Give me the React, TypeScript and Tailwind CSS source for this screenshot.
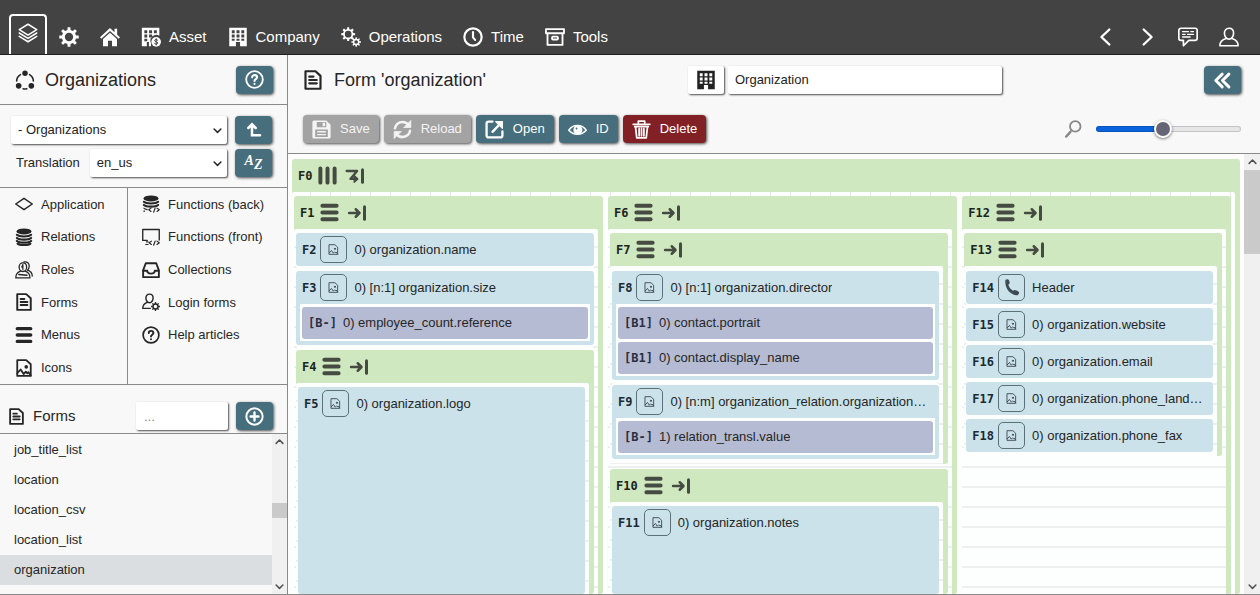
import React, { useState } from 'react';

type IconProps = { className?: string };

function Svg({
  className = 'size-5',
  fill = false,
  w = 2,
  children,
}: {
  className?: string;
  fill?: boolean;
  w?: number;
  children: React.ReactNode;
}) {
  return (
    <svg
      viewBox="0 0 24 24"
      className={`shrink-0 ${className}`}
      fill={fill ? 'currentColor' : 'none'}
      stroke={fill ? 'none' : 'currentColor'}
      strokeWidth={w}
      strokeLinecap="round"
      strokeLinejoin="round"
      aria-hidden="true"
    >
      {children}
    </svg>
  );
}

function gearPath(cx: number, cy: number, outer: number, inner: number, hole: number, teeth = 8) {
  const pts: string[] = [];
  const step = (Math.PI * 2) / teeth;
  for (let i = 0; i < teeth; i++) {
    const a = i * step - Math.PI / 2;
    const at = (r: number, d: number) =>
      `${(cx + r * Math.cos(a + d * step)).toFixed(2)} ${(cy + r * Math.sin(a + d * step)).toFixed(2)}`;
    pts.push(at(inner, -0.28), at(outer, -0.18), at(outer, 0.18), at(inner, 0.28));
  }
  return `M${pts.join('L')}ZM${cx - hole} ${cy}a${hole} ${hole} 0 1 0 ${hole * 2} 0a${hole} ${hole} 0 1 0 ${-hole * 2} 0Z`;
}

const LayersIcon = ({ className }: IconProps) => (
  <Svg className={className} w={1.8}>
    <path d="M12 1.5 22.5 8 12 14.5 1.5 8Z" />
    <path d="M1.5 12 12 18.500 22.500 12M1.500 16 12 22.500 22.500 16" />
  </Svg>
);
const GearIcon = ({ className }: IconProps) => (
  <Svg className={className} fill>
    <path fillRule="evenodd" d={gearPath(12, 12, 11.8, 8.6, 5)} />
  </Svg>
);
const GearsIcon = ({ className }: IconProps) => (
  <Svg className={className} fill>
    <path fillRule="evenodd" d={gearPath(8.6, 8.6, 8.4, 6.2, 4)} />
    <path fillRule="evenodd" d={gearPath(18.2, 18, 5.8, 4.1, 2.2)} />
  </Svg>
);
const HomeIcon = ({ className }: IconProps) => (
  <Svg className={className} fill>
    <path d="M12 1.2 0 12.4l1.6 1.8L12 4.8l10.4 9.4 1.6-1.8-3.4-3.2V2h-3.2v4.200Z" />
    <path d="M12 7 3.6 14.5V23h6v-6.5h4.8V23h6v-8.5Z" />
  </Svg>
);
const BUILDING =
  'M1.5 1h21v22h-8v-5h-5v5h-8ZM4.500 4v3.500h3.500V4ZM10.200 4v3.500h3.600V4ZM16 4v3.500h3.500V4ZM4.500 9v3.500h3.500V9ZM10.200 9v3.500h3.600V9ZM16 9v3.500h3.500V9ZM4.500 14v2.500h3.500V14ZM10.200 14v2.500h3.600V14ZM16 14v2.500h3.500V14Z';
const BuildingIcon = ({ className }: IconProps) => (
  <Svg className={className} fill>
    <path fillRule="evenodd" d={BUILDING} />
  </Svg>
);
const AssetIcon = ({ className }: IconProps) => (
  <Svg className={className} fill>
    <path
      fillRule="evenodd"
      d="M1 1h21v9.5a7 7 0 0 0-10 9V23H9.500v-5H7v5H1ZM4 4v3.500h3.500V4ZM9.700 4v3.500h3.600V4ZM15.500 4v3.500H19V4ZM4 9v3.500h3.500V9ZM9.700 9v3.500h3.600V9ZM4 14v3h3.500v-3Z"
    />
    <circle cx="18.2" cy="17.8" r="5.8" />
    <path
      d="M20 15.800c-1-1.200-3.600-1-3.600.5 0 1.600 3.800 1.200 3.800 3 0 1.500-2.800 1.700-3.900.5M18.200 14v7.600"
      className="stroke-[#434343]"
      fill="none"
      strokeWidth="1.2"
    />
  </Svg>
);
const ClockIcon = ({ className }: IconProps) => (
  <Svg className={className} w={2.6}>
    <circle cx="12" cy="12" r="10.4" />
    <path d="M12 6v6.500l2.500 3" />
  </Svg>
);
const ArchiveIcon = ({ className }: IconProps) => (
  <Svg className={className} w={2.2}>
    <path d="M1.200 2.500h21.600v5H1.200ZM3 7.500V21.500h18V7.500" />
    <rect x="8.5" y="11.5" width="7" height="3.5" rx="1" />
  </Svg>
);
const ChatIcon = ({ className }: IconProps) => (
  <Svg className={className} w={2}>
    <path d="M3.500 1.500h17a2.500 2.500 0 0 1 2.500 2.500v9.500a2.500 2.500 0 0 1-2.500 2.500H13l-6.500 6.500V16h-3A2.500 2.500 0 0 1 1 13.500V4a2.500 2.500 0 0 1 2.500-2.500Z" />
    <path d="M5.500 5.500h7M15.500 5.500h3M5.500 8.800h3M11.500 8.800h7M5.500 12h9" strokeWidth="1.7" />
  </Svg>
);
const UserIcon = ({ className }: IconProps) => (
  <Svg className={className} w={1.9}>
    <path d="M12 1.500c3.400 0 5.500 2.600 5.500 6s-2.300 7-5.500 7-5.500-3.600-5.500-7 2.100-6 5.500-6Z" />
    <path d="M8.500 13.800C4 15 1 17 1 22.500h22c0-5.500-3-7.500-7.500-8.700" />
  </Svg>
);
const ChevronIcon = ({ className, right }: IconProps & { right?: boolean }) => (
  <Svg className={className} w={2.8}>
    <path d={right ? 'M8 3l9.500 9L8 21' : 'M16 3l-9.500 9 9.500 9'} />
  </Svg>
);
const CycleIcon = ({ className }: IconProps) => (
  <Svg className={className} w={1.9}>
    <circle cx="12" cy="4" r="3.3" fill="currentColor" stroke="none" />
    <circle cx="4.4" cy="19" r="3.4" fill="currentColor" stroke="none" />
    <circle cx="19.6" cy="19" r="3.4" fill="currentColor" stroke="none" />
    <path d="M6.500 5.500C3.600 7.400 2 10 2 13.200M17.500 5.500C20.400 7.400 22 10 22 13.200M9.800 22.500c1.500.4 2.900.4 4.400 0" />
  </Svg>
);
const HelpIcon = ({ className }: IconProps) => (
  <Svg className={className} w={2.3}>
    <circle cx="12" cy="12" r="10.5" />
    <path d="M9 9.300c0-3.800 6.200-3.700 6.200 0 0 2.300-3.200 2.300-3.200 4.600M12 17.500v.1" strokeWidth="2.6" />
  </Svg>
);
const PlusIcon = ({ className }: IconProps) => (
  <Svg className={className} w={2.5}>
    <circle cx="12" cy="12" r="10.3" />
    <path d="M12 7v10M7 12h10" strokeWidth="3" />
  </Svg>
);
const UpIcon = ({ className }: IconProps) => (
  <Svg className={className} w={3.8}>
    <path d="M3.500 9 9 3.500 14.500 9M9 5v15h12" strokeLinejoin="miter" />
  </Svg>
);
const DocIcon = ({ className }: IconProps) => (
  <Svg className={className} w={2.6}>
    <path d="M3 1.500h12l6 5.500v15.500H3Z" />
    <path d="M7.500 8h5M7.500 12h9M7.500 16h9" />
  </Svg>
);
const ImageIcon = ({ className, w = 2.4 }: IconProps & { w?: number }) => (
  <Svg className={className} w={w}>
    <path d="M3 1.500h12l6 5.500v15.500H3Z" />
    <path d="m3 19 4.500-5 4 6 3-3 2 2 1.500-1.500 3 4.500" />
    <circle cx="15" cy="10.5" r="1.2" fill="currentColor" />
  </Svg>
);
const DiamondIcon = ({ className }: IconProps) => (
  <Svg className={className} w={2}>
    <path d="M12 4.500 23 12l-11 7.500L1 12Z" />
  </Svg>
);
const DbIcon = ({ className, code }: IconProps & { code?: boolean }) => (
  <Svg className={className} w={2.8}>
    <ellipse cx="12" cy="4.5" rx="10" ry="4" fill="currentColor" stroke="none" />
    <path d="M2.500 9c3 3 16 3 19 0M2.500 13.200c3 3 16 3 19 0" />
    {code ? (
      <path
        d="M2.500 17.500c1 1 2.500 1.500 4.500 2M2.500 21.500h1M12 17.500l-3 2.200 3 2.200M15.500 23l2-5.500M20 17.500l3 2.200-3 2.200"
        strokeWidth="1.5"
      />
    ) : (
      <path d="M2.500 17.200c3 3 16 3 19 0M3.500 21c3 2.500 14 2.500 17 0" />
    )}
  </Svg>
);
const ScreenIcon = ({ className }: IconProps) => (
  <Svg className={className} w={1.8}>
    <path d="M7 16.500H1V2h22v14" />
    <path d="M5 22h3M8 18.500H6M12.500 17.500l-3 2.200 3 2.200M15.500 23l2-5.500M20 17.500l3 2.200-3 2.200" strokeWidth="1.6" />
  </Svg>
);
const RolesIcon = ({ className }: IconProps) => (
  <Svg className={className} w={1.7}>
    <path d="M10.500 2.500c3.200 0 5 2.400 5 5.500s-2 6-5 6-5-2.900-5-6 1.800-5.500 5-5.500Z" />
    <path d="M7.500 13.500C3.500 14.700 1 17 1 22.500h19c0-5.500-2.500-7.800-6.500-9" />
    <path d="M12 1.200c4.500-.8 7 2 7 5.600 0 2.400-1 4.300-2.500 5.400 4 1.100 6.500 3.600 6.500 7.800M10.500 5v6M9 8l1.500-3M5 18l11 1" />
  </Svg>
);
const TrayIcon = ({ className }: IconProps) => (
  <Svg className={className} w={2.5}>
    <path d="M1.500 12.500 5 3h14l3.500 9.500V21.500h-21Z" />
    <path d="M1.500 13H7c0 5 10 5 10 0h5.500" />
  </Svg>
);
const LoginIcon = ({ className }: IconProps) => (
  <Svg className={className} w={1.9}>
    <path d="M10 1.500c3 0 4.800 2.200 4.800 5.200s-2 6.300-4.800 6.300-4.800-3.300-4.800-6.300S7 1.500 10 1.500Z" />
    <path d="M7 12.500C3 14 1 16 1 20.500h10" />
    <path d={gearPath(18, 18, 6, 4.4, 2.4)} fill="currentColor" fillRule="evenodd" stroke="none" />
  </Svg>
);
const MenuIcon = ({ className, vertical, thick = 4 }: IconProps & { vertical?: boolean; thick?: number }) => (
  <Svg className={className} w={thick}>
    <path d={vertical ? 'M3 3v18M12 3v18M21 3v18' : 'M3 3.500h18M3 12h18M3 20.500h18'} />
  </Svg>
);
const ArrowEndIcon = ({ className }: IconProps) => (
  <Svg className={className} w={3}>
    <path d="M2.500 12h12M10.500 7.500l4.500 4.500-4.500 4.500" />
    <path d="M21 4.500v15" strokeWidth="3.6" />
  </Svg>
);
const WrapEndIcon = ({ className }: IconProps) => (
  <Svg className={className} w={2.8}>
    <path d="M2 6h12.500L6.500 15.500H13" />
    <path d="M11 11.500 15.500 15.500 11 19.500Z" fill="currentColor" strokeWidth="1.5" />
    <path d="M21 4.500v15" strokeWidth="3.6" />
  </Svg>
);
const SaveIcon = ({ className }: IconProps) => (
  <Svg className={className} fill>
    <path
      fillRule="evenodd"
      d="M3 0.500h15L23.500 6v15.500a2 2 0 0 1-2 2h-19a2 2 0 0 1-2-2v-19a2 2 0 0 1 2-2ZM6 2.500V9h12V2.500ZM13.500 3.500h3v4.500h-3ZM4 12v9.500h16V12ZM6.500 14h11v1.700h-11ZM6.500 17.700h11v1.700h-11Z"
    />
  </Svg>
);
const ReloadIcon = ({ className }: IconProps) => (
  <Svg className={className} w={3.2}>
    <path d="M2.500 10.500C3 5.500 7.500 2.500 12 2.500c3.500 0 6 1.500 8 4M21.500 13.500c-.5 5-5 8-9.500 8-3.500 0-6-1.500-8-4" />
    <path d="M22.500 1v8.500H14ZM1.500 23v-8.500H10Z" fill="currentColor" strokeWidth="1" />
  </Svg>
);
const OpenIcon = ({ className }: IconProps) => (
  <Svg className={className} w={2.9}>
    <path d="M9.500 2H4.500A2.500 2.500 0 0 0 2 4.500v15A2.500 2.500 0 0 0 4.500 22h15a2.500 2.500 0 0 0 2.500-2.500V14.500" />
    <path d="m9.500 15 9-9.500" />
    <path d="M13.500 2H22v8.500Z" fill="currentColor" strokeWidth="1.5" />
  </Svg>
);
const EyeIcon = ({ className }: IconProps) => (
  <Svg className={className} w={1.9}>
    <path d="M1 13C4 8.500 8 7 12 7s8 1.500 11 6c-3 3.500-7 5-11 5S4 16.500 1 13Z" />
    <circle cx="12.5" cy="12.5" r="4.8" fill="currentColor" />
    <circle cx="10.8" cy="10.8" r="1.2" className="fill-[#466e7c]" stroke="none" />
  </Svg>
);
const TrashIcon = ({ className }: IconProps) => (
  <Svg className={className} w={2.2}>
    <path d="M1.500 5.500h21M8 5V1.500h8V5M3.500 8.500h17M4.500 9l1.500 13.500h12L19.500 9M9 11v9M12 11v9M15 11v9" />
  </Svg>
);
const DoubleLeftIcon = ({ className }: IconProps) => (
  <Svg className={className} w={4}>
    <path d="m11.500 3-9 9 9 9M21 3l-9 9 9 9" />
  </Svg>
);
const MagnifierIcon = ({ className }: IconProps) => (
  <Svg className={className} w={2.4}>
    <circle cx="15" cy="8.5" r="7" />
    <path d="m9.500 14.500-1 1" />
    <path d="m8 16.500-5 5.500" strokeWidth="3.4" />
  </Svg>
);
const PhoneIcon = ({ className }: IconProps) => (
  <Svg className={className} fill>
    <path d="M3.500 1.200C5 .2 6.500 0 7.500.6c1.300 1.400 2 3.200 2 5.400L7.500 8c1 3.500 3.500 6.500 6.500 8.500l2.500-1c2.500.2 4.500 1.300 6 3 .4 1.800-.3 3.200-1.800 4.300C11 24 1.500 12.500 3.500 1.200Z" />
  </Svg>
);
const CaretIcon = ({ className, up }: IconProps & { up?: boolean }) => (
  <Svg className={className} w={4}>
    <path d={up ? 'M3 17l9-9 9 9' : 'M3 8l9 9 9-9'} />
  </Svg>
);

const PRESS = 'rounded shadow-[1px_1px_3px_rgba(0,0,0,0.7)]';
const FIELD = 'bg-white text-[#222] shadow-[1px_1px_2px_rgba(0,0,0,0.7)] outline-none rounded-[2px]';

function IconButton({ label, children }: { label: string; children: React.ReactNode }) {
  return (
    <button
      type="button"
      aria-label={label}
      className={`flex h-7 w-[37px] shrink-0 items-center justify-center bg-[#466e7c] text-white ${PRESS}`}
    >
      {children}
    </button>
  );
}

function Dropdown({ label, value, className }: { label: string; value: string; className: string }) {
  return (
    <div className={`relative ${className}`}>
      <select id={label} aria-label={label} className={`h-7 w-full appearance-none px-[7px] text-[13px] ${FIELD}`}>
        <option>{value}</option>
      </select>
      <CaretIcon className="pointer-events-none absolute top-[10px] right-[5px] size-[9px]" />
    </div>
  );
}

const MODULES = [
  { label: 'Asset', Icon: AssetIcon },
  { label: 'Company', Icon: BuildingIcon },
  { label: 'Operations', Icon: GearsIcon },
  { label: 'Time', Icon: ClockIcon },
  { label: 'Tools', Icon: ArchiveIcon },
];

function TopBar() {
  return (
    <header className="flex h-[55px] shrink-0 items-end border-b border-[#1f1f1f] bg-[#434343] pr-[21px] pl-[9px] text-[15px] text-white">
      <a
        href="#builder"
        aria-label="Builder"
        className="flex h-10 w-[38px] items-start justify-center rounded-t-[4px] border-2 border-b-0 border-white pt-[7px]"
      >
        <LayersIcon className="size-5" />
      </a>
      <nav className="ml-3 flex h-[34px] items-center gap-[21px]">
        <a href="#admin" aria-label="Admin">
          <GearIcon className="size-5" />
        </a>
        <a href="#home" aria-label="Home">
          <HomeIcon className="size-5" />
        </a>
        {MODULES.map(({ label, Icon }) => (
          <a key={label} href={`#${label}`} className="flex items-center gap-2">
            <Icon className="size-5" />
            {label}
          </a>
        ))}
      </nav>
      <div className="ml-auto flex h-[34px] items-center gap-[21px]">
        <button type="button" aria-label="Back">
          <ChevronIcon className="size-5" />
        </button>
        <button type="button" aria-label="Forward">
          <ChevronIcon right className="size-5" />
        </button>
        <button type="button" aria-label="Feedback">
          <ChatIcon className="size-5" />
        </button>
        <button type="button" aria-label="Account">
          <UserIcon className="size-5" />
        </button>
      </div>
    </header>
  );
}

const NAV_LEFT = [
  { label: 'Application', icon: <DiamondIcon className="size-[18px]" /> },
  { label: 'Relations', icon: <DbIcon className="size-[18px]" /> },
  { label: 'Roles', icon: <RolesIcon className="size-[18px]" /> },
  { label: 'Forms', icon: <DocIcon className="size-[18px]" /> },
  { label: 'Menus', icon: <MenuIcon thick={4.4} className="size-[18px]" /> },
  { label: 'Icons', icon: <ImageIcon className="size-[18px]" /> },
];
const NAV_RIGHT = [
  { label: 'Functions (back)', icon: <DbIcon code className="size-[18px]" /> },
  { label: 'Functions (front)', icon: <ScreenIcon className="size-[18px]" /> },
  { label: 'Collections', icon: <TrayIcon className="size-[18px]" /> },
  { label: 'Login forms', icon: <LoginIcon className="size-[18px]" /> },
  { label: 'Help articles', icon: <HelpIcon className="size-[18px]" /> },
];

function NavColumn({ items, className }: { items: typeof NAV_LEFT; className: string }) {
  return (
    <nav className={`grid grid-rows-6 ${className}`}>
      {items.map((item) => (
        <a key={item.label} href={`#${item.label}`} className="flex items-center gap-2">
          {item.icon}
          {item.label}
        </a>
      ))}
    </nav>
  );
}

const FORMS = ['job_title_list', 'location', 'location_csv', 'location_list', 'organization'];
const LINE = 'border-[#8a8a8a]';

function Sidebar() {
  return (
    <aside className={`flex w-72 shrink-0 flex-col border-r ${LINE}`}>
      <div className={`flex h-[50px] shrink-0 items-center border-b pr-[14px] pl-[15px] ${LINE}`}>
        <CycleIcon className="size-5" />
        <h1 className="ml-[10px] flex-1 pt-px text-[18px]">Organizations</h1>
        <IconButton label="Help">
          <HelpIcon className="size-[19px]" />
        </IconButton>
      </div>
      <div className={`flex shrink-0 flex-col gap-[5px] border-b pt-[11px] pr-[15px] pb-[10px] pl-[11px] ${LINE}`}>
        <div className="flex gap-2">
          <Dropdown label="Module" value="- Organizations" className="flex-1" />
          <IconButton label="Parent module">
            <UpIcon className="size-4" />
          </IconButton>
        </div>
        <div className="flex items-center gap-2">
          <label htmlFor="Translation" className="pr-[2px] pl-[5px]">
            Translation
          </label>
          <Dropdown label="Translation" value="en_us" className="flex-1" />
          <IconButton label="Translations">
            <span className="pb-1 font-['Liberation_Serif',serif] text-[14px] leading-none font-bold italic">
              A<sub className="text-[14px]">Z</sub>
            </span>
          </IconButton>
        </div>
      </div>
      <div className={`flex h-[197px] shrink-0 border-b ${LINE}`}>
        <NavColumn items={NAV_LEFT} className={`w-32 border-r pl-[15px] ${LINE}`} />
        <NavColumn items={NAV_RIGHT} className="flex-1 pl-[14px]" />
      </div>
      <div className={`flex h-[49px] shrink-0 items-end border-b pr-[14px] pb-[3px] pl-2 ${LINE}`}>
        <div className="flex h-7 flex-1 items-center gap-2 text-[15px]">
          <DocIcon className="size-[17px]" />
          <h2>Forms</h2>
        </div>
        <input
          aria-label="Filter forms"
          placeholder="..."
          className={`mr-2 h-7 w-[92px] px-2 text-[13px] placeholder:text-[#888] ${FIELD}`}
        />
        <IconButton label="Add form">
          <PlusIcon className="size-[19px]" />
        </IconButton>
      </div>
      <div className="flex min-h-0 flex-1">
        <ul className="min-w-0 flex-1 overflow-hidden pt-px">
          {FORMS.map((name) => (
            <li key={name}>
              <a
                href={`#${name}`}
                className={`flex h-[30px] items-center pl-[14px] ${name === 'organization' ? 'bg-[#dadee0]' : ''}`}
              >
                {name}
              </a>
            </li>
          ))}
        </ul>
        <div className="flex w-[15px] flex-col items-center bg-[#f0f0f0] py-[3px]">
          <CaretIcon up className="size-[9px] text-[#505050]" />
          <div className="mt-[57px] h-[15px] w-full bg-[#cacaca]" />
          <CaretIcon className="mt-auto size-[9px] text-[#505050]" />
        </div>
      </div>
    </aside>
  );
}

const TOOLS = [
  { label: 'Save', Icon: SaveIcon, tone: 'bg-[#a3a3a3] text-[#f4f4f4]' },
  { label: 'Reload', Icon: ReloadIcon, tone: 'bg-[#a3a3a3] text-[#f4f4f4]' },
  { label: 'Open', Icon: OpenIcon, tone: 'bg-[#466e7c] text-white' },
  { label: 'ID', Icon: EyeIcon, tone: 'bg-[#466e7c] text-white' },
  { label: 'Delete', Icon: TrashIcon, tone: 'bg-[#822125] text-white' },
];

function Toolbar() {
  const [zoom, setZoom] = useState(46);
  return (
    <div className={`shrink-0 border-b pr-[19px] pl-[15px] ${LINE}`}>
      <div className="flex h-[50px] items-center justify-between">
        <div className="flex items-center gap-[11px]">
          <DocIcon className="size-5" />
          <h2 className="text-[18px]">Form 'organization'</h2>
        </div>
        <div className="flex gap-1">
          <button type="button" aria-label="Form icon" className={`flex h-7 w-9 items-center justify-center ${FIELD}`}>
            <BuildingIcon className="size-5" />
          </button>
          <input
            aria-label="Form title"
            defaultValue="Organization"
            className={`h-7 w-[274px] px-[7px] pb-[2px] text-[13px] ${FIELD}`}
          />
        </div>
        <IconButton label="Collapse">
          <DoubleLeftIcon className="size-[17px]" />
        </IconButton>
      </div>
      <div className="flex h-12 items-center gap-[5px]">
        {TOOLS.map(({ label, Icon, tone }) => (
          <button key={label} type="button" className={`flex h-7 items-center gap-[9px] px-[9px] ${tone} ${PRESS}`}>
            <Icon className="size-[19px]" />
            {label}
          </button>
        ))}
        <MagnifierIcon className="mr-[9px] ml-auto size-[18px] text-[#888]" />
        <input
          type="range"
          aria-label="Zoom"
          value={zoom}
          onChange={(e) => setZoom(Number(e.target.value))}
          style={{ backgroundImage: `linear-gradient(to right, #0a63dd ${zoom}%, #e6e6e6 ${zoom}%)` }}
          className="h-[6px] w-[145px] appearance-none rounded-full shadow-[inset_0_0_0_1px_rgba(0,0,0,0.15)] [&::-webkit-slider-thumb]:size-[18px] [&::-webkit-slider-thumb]:appearance-none [&::-webkit-slider-thumb]:rounded-full [&::-webkit-slider-thumb]:border-2 [&::-webkit-slider-thumb]:border-white [&::-webkit-slider-thumb]:bg-[#656575] [&::-webkit-slider-thumb]:shadow-[0_1px_3px_rgba(0,0,0,0.5)]"
        />
      </div>
    </div>
  );
}

const TAG = "font-['DejaVu_Sans_Mono',monospace] text-[12px] font-bold";
const ROWS =
  'bg-[repeating-linear-gradient(to_bottom,transparent_0px,transparent_17px,#eef0f0_17px,#eef0f0_19px,transparent_19px,transparent_20px)]';
const COLS =
  'bg-[repeating-linear-gradient(to_right,transparent_0px,transparent_18px,#e6e8e6_18px,#e6e8e6_19px,transparent_19px,transparent_20px)]';
const HALO = 'shadow-[0_3px_0_#fdfefe,0_-2px_0_#fdfefe]';

function Group({
  id,
  row,
  spacing = 'pt-1 gap-[5px]',
  className = '',
  children,
}: {
  id: string;
  row?: boolean;
  spacing?: string;
  className?: string;
  children: React.ReactNode;
}) {
  return (
    <section className={`flex min-w-0 flex-col rounded-[3px] bg-[#cfe8bf] pr-[5px] ${className}`}>
      <div className="flex h-[33px] shrink-0 items-center pl-[6px] text-[#454a42]">
        <span className={`${TAG} text-[#1d241a]`}>{id}</span>
        <MenuIcon vertical={row} thick={5} className="ml-[6px] size-[19px]" />
        {row ? <WrapEndIcon className="ml-2 size-5" /> : <ArrowEndIcon className="ml-2 size-5" />}
      </div>
      <div className="flex min-h-0 flex-1 flex-col rounded-t-[2px] bg-[#fdfefe]">
        <div className={`flex min-h-0 flex-1 pr-1 pl-[2px] ${spacing} ${row ? COLS : `${ROWS} flex-col`}`}>{children}</div>
      </div>
    </section>
  );
}

function Field({
  id,
  text,
  icon,
  columns,
  className = '',
}: {
  id: string;
  text: string;
  icon?: React.ReactNode;
  columns?: [string, string][];
  className?: string;
}) {
  return (
    <div className={`rounded-[3px] bg-[#cbe2ea] ${HALO} ${columns ? 'px-1 pb-1' : ''} ${className}`}>
      <div className={`flex h-[33px] items-center ${columns ? 'pl-[2px]' : 'pl-[6px]'}`}>
        <span className={`${TAG} shrink-0 text-[#1b2a33]`}>{id}</span>
        <button
          type="button"
          aria-label={`Icon of ${id}`}
          className="ml-1 flex size-[27px] shrink-0 items-center justify-center rounded-[5px] border border-[#5c707a] text-[#3c4a52]"
        >
          {icon ?? <ImageIcon w={2} className="size-[11px]" />}
        </button>
        <span className="ml-[7px] min-w-0 truncate">{text}</span>
      </div>
      {columns && (
        <div className="flex flex-col gap-[3px] bg-[#fdfefe] px-[2px] pt-[3px] pb-[2px]">
          {columns.map(([tag, name]) => (
            <div key={name} className="flex h-8 items-center gap-[6px] rounded-[3px] bg-[#b5bbd2] pl-[6px]">
              <span className={`${TAG} text-[#2b2f40]`}>{tag}</span>
              <span>{name}</span>
            </div>
          ))}
        </div>
      )}
    </div>
  );
}

function Canvas() {
  return (
    <div className="flex min-h-0 flex-1">
      <div className="flex min-w-0 flex-1 flex-col overflow-hidden bg-[#fdfdfd] px-1 pt-[5px]">
        <Group id="F0" row className="flex-1">
          <Group id="F1" className="flex-[309]">
            <Field id="F2" text="0) organization.name" />
            <Field id="F3" text="0) [n:1] organization.size" columns={[['[B-]', '0) employee_count.reference']]} />
            <Group id="F4" className={`flex-1 ${HALO}`}>
              <Field id="F5" text="0) organization.logo" className="flex-1" />
            </Group>
          </Group>
          <Group id="F6" className="flex-[350]">
            <Group id="F7" spacing="pt-[5px] gap-[5px]" className="shrink-0">
              <Field
                id="F8"
                text="0) [n:1] organization.director"
                columns={[
                  ['[B1]', '0) contact.portrait'],
                  ['[B1]', '0) contact.display_name'],
                ]}
              />
              <Field
                id="F9"
                text="0) [n:m] organization_relation.organization…"
                className="mb-[5px]"
                columns={[['[B-]', '1) relation_transl.value']]}
              />
            </Group>
            <Group id="F10" className="flex-1">
              <Field id="F11" text="0) organization.notes" className="flex-1" />
            </Group>
          </Group>
          <Group id="F12" className="flex-[268]">
            <Group id="F13" spacing="pt-[5px] gap-1">
              <Field id="F14" text="Header" icon={<PhoneIcon className="size-[17px]" />} />
              <Field id="F15" text="0) organization.website" />
              <Field id="F16" text="0) organization.email" />
              <Field id="F17" text="0) organization.phone_land…" />
              <Field id="F18" text="0) organization.phone_fax" className="mb-1" />
            </Group>
          </Group>
        </Group>
      </div>
      <div className="flex w-4 shrink-0 flex-col items-center bg-[#f0f0f0] py-[3px]">
        <CaretIcon up className="size-[9px] text-[#505050]" />
        <div className="mt-1 h-[84px] w-full bg-[#cacaca]" />
        <CaretIcon className="mt-auto size-[9px] text-[#505050]" />
      </div>
    </div>
  );
}

export default function App() {
  return (
    <div className="flex h-screen flex-col bg-[#f8f8f8] font-['Liberation_Sans',Arial,sans-serif] text-[13px] text-[#262626]">
      <TopBar />
      <div className={`flex min-h-0 flex-1 border-b ${LINE}`}>
        <Sidebar />
        <main className="flex min-w-0 flex-1 flex-col">
          <Toolbar />
          <Canvas />
        </main>
      </div>
    </div>
  );
}
